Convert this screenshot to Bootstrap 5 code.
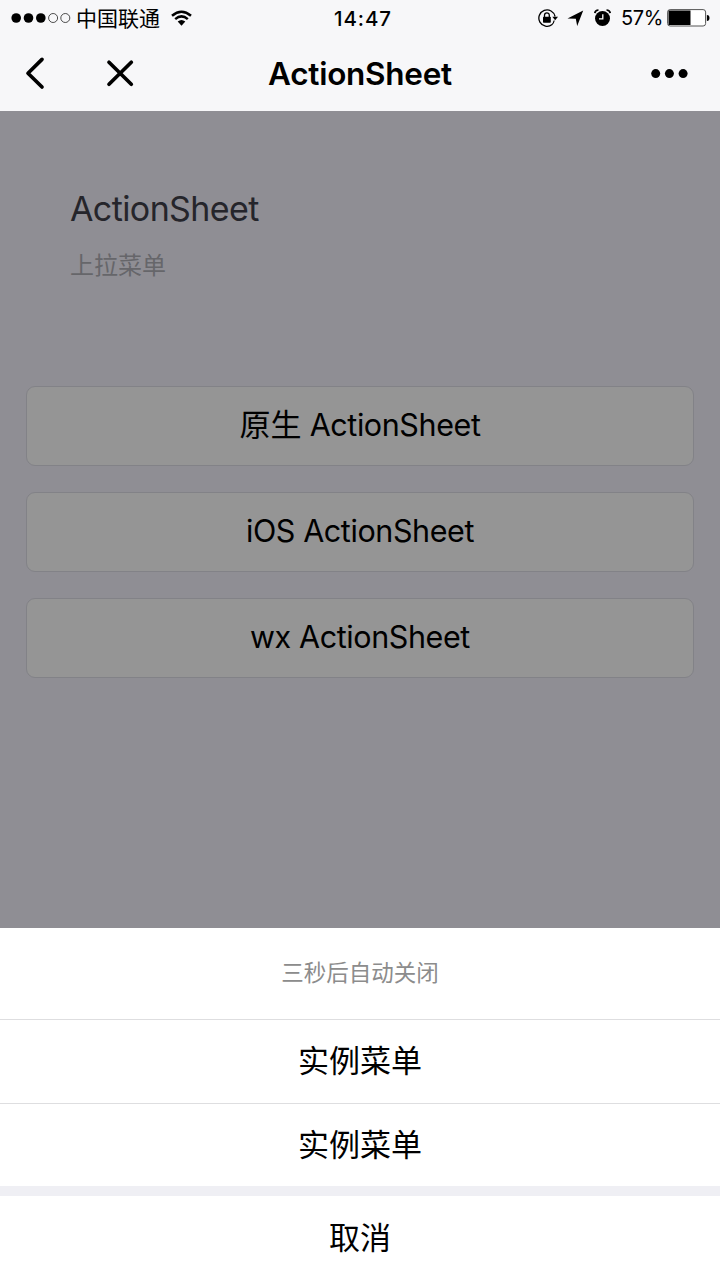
<!DOCTYPE html>
<html lang="zh-CN">
<head>
<meta charset="utf-8">
<meta name="viewport" content="width=device-width, initial-scale=1">
<title>ActionSheet</title>
<link href="https://cdn.jsdelivr.net/npm/bootstrap@5.3.0/dist/css/bootstrap.min.css" rel="stylesheet">
<style>
  body { font-family: Inter, "Noto Sans CJK SC", sans-serif; color: #000; background: #8f8e94; }
  svg { display: block; flex: none; }
  .screen { width: 720px; height: 1280px; }
  .top-area { background: #f7f7f9; height: 111px; }
  .status-bar { height: 36px; line-height: 37px; padding-left: 11px; padding-right: 10px; font-size: 21px; }
  .status-side { width: 323px; }
  .carrier { margin-left: 5px; margin-right: 11px; }
  .clock { width: 60px; font-size: 20.5px; font-weight: 500; letter-spacing: .9px; }
  .battery-level { font-size: 20px; letter-spacing: -.4px; width: 41px; margin-left: 10px; margin-right: 5px; line-height: 38px; }
  .title-bar { height: 75px; }
  .title-side { width: 260px; }
  .page-title { font-size: 31.5px; font-weight: 600; line-height: 75px; letter-spacing: -.25px; }
  .page-head { padding: 75px 70px 0; height: 275px; }
  .page-head h1 { font-size: 34px; font-weight: 400; line-height: 46px; color: #25252b; letter-spacing: -.6px; }
  .page-head p { font-size: 24px; line-height: 36px; color: #66666a; margin-top: 16px; }
  .button-list { gap: 26px; padding: 0 26px; }
  .demo-btn { height: 80px; padding: 0 0 2px; font-size: 30.5px; line-height: 76px; letter-spacing: -.4px; color: #000; background: #959595; border: 1px solid #828287; border-radius: 9px; }
  .demo-btn .cjk { font-size: 31px; letter-spacing: 0; }
  .sheet { height: 352px; background: #efeff4; }
  .sheet-title { height: 91px; line-height: 89px; font-size: 22.5px; color: #8c8c8c; }
  .sheet-item { height: 84px; line-height: 81px; font-size: 31px; border-top: 1px solid #dedee0; }
  .sheet-item-last { height: 83px; }
  .sheet-cancel { margin-top: 10px; height: 84px; line-height: 84px; font-size: 31px; }
</style>
</head>
<body>
<main class="screen d-flex flex-column overflow-hidden">
  <header class="top-area">
    <div class="status-bar d-flex align-items-center text-nowrap">
      <div class="status-side d-flex align-items-center">
        <svg width="60" height="12" viewBox="0 0 60 12"><g><circle cx="5.2" cy="6" r="4.8"/><circle cx="17.5" cy="6" r="4.8"/><circle cx="29.8" cy="6" r="4.8"/></g><g fill="none" stroke="#222" stroke-width=".8"><circle cx="42.1" cy="6" r="4.5"/><circle cx="54.3" cy="6" r="4.5"/></g></svg>
        <span class="carrier">中国联通</span>
        <svg width="21" height="17" viewBox="0 0 21 17" fill="none" stroke="#000" stroke-width="2.5"><path d="M1 5.7Q10.5-2.2 20 5.7M4.2 9.1Q10.5 3.7 16.8 9.1"/><path d="M6.7 11.6Q10.5 8.2 14.3 11.6L10.5 15.7Z" fill="#000" stroke="none"/></svg>
      </div>
      <span class="clock">14:47</span>
      <div class="d-flex align-items-center ms-auto">
        <svg width="20" height="20" viewBox="0 0 20 20"><path d="M14.1 16.6A8.2 8.2 0 1 1 17.1 8.5" fill="none" stroke="#000" stroke-width="1.3"/><path d="M14.3 8.8H20L17.2 12.2Z"/><path d="M16.2 12.5Q15.7 14.9 14 16.6" fill="none" stroke="#000" stroke-width="1.2"/><rect x="5" y="8.7" width="7.8" height="6" rx=".6"/><path d="M6.5 9V7.2a2.4 2.4 0 0 1 4.8 0V9" fill="none" stroke="#000" stroke-width="1.3"/></svg>
        <svg class="ms-2 me-2" width="20" height="18" viewBox="0 0 20 18"><path d="M1.5 9.5 17.2 1.6 11.2 17 9.8 9.8Z"/></svg>
        <svg width="17" height="20" viewBox="0 0 17 20"><circle cx="8.5" cy="10.5" r="7.5"/><path d="M.8 5.2Q1.2 2.1 4.5 2M16.2 5.2Q15.8 2.1 12.5 2" fill="none" stroke="#000" stroke-width="1.7"/><path d="M8.8 6.2v4.7H5" fill="none" stroke="#fff" stroke-width="1.3"/></svg>
        <span class="battery-level">57%</span>
        <svg width="43" height="18" viewBox="0 0 43 18"><rect x=".6" y=".6" width="38" height="16.4" rx="2.5" fill="#fff" stroke="#555" stroke-width="1"/><path d="M1.5 1.5H23.5V16H1.5Z"/><path d="M39.9 6q2.6 0 2.6 3t-2.6 3Z"/></svg>
      </div>
    </div>
    <div class="title-bar d-flex align-items-center justify-content-between">
      <div class="title-side d-flex align-items-center">
        <svg width="140" height="40" viewBox="0 0 140 40" fill="none" stroke="#000" stroke-width="3.7" stroke-linecap="round" stroke-linejoin="round"><path d="M42 5.4 28 19.2 42 33M109 8.2l22.3 22M131.3 8.2l-22.3 22"/></svg>
      </div>
      <div class="page-title">ActionSheet</div>
      <div class="title-side d-flex justify-content-end">
        <svg width="70" height="12" viewBox="0 0 70 12"><circle cx="5.7" cy="5.6" r="4.5"/><circle cx="19.4" cy="5.6" r="4.5"/><circle cx="33.1" cy="5.6" r="4.5"/></svg>
      </div>
    </div>
  </header>

  <section class="flex-grow-1">
    <div class="page-head">
      <h1 class="m-0">ActionSheet</h1>
      <p class="mb-0">上拉菜单</p>
    </div>
    <div class="button-list d-grid">
      <button type="button" class="btn demo-btn"><span class="cjk">原生</span> ActionSheet</button>
      <button type="button" class="btn demo-btn">iOS ActionSheet</button>
      <button type="button" class="btn demo-btn">wx ActionSheet</button>
    </div>
  </section>

  <section class="sheet text-center">
    <div class="sheet-title bg-white">三秒后自动关闭</div>
    <div class="sheet-item bg-white">实例菜单</div>
    <div class="sheet-item sheet-item-last bg-white">实例菜单</div>
    <div class="sheet-cancel bg-white">取消</div>
  </section>
</main>
<script src="https://cdn.jsdelivr.net/npm/bootstrap@5.3.0/dist/js/bootstrap.bundle.min.js"></script>
</body>
</html>
